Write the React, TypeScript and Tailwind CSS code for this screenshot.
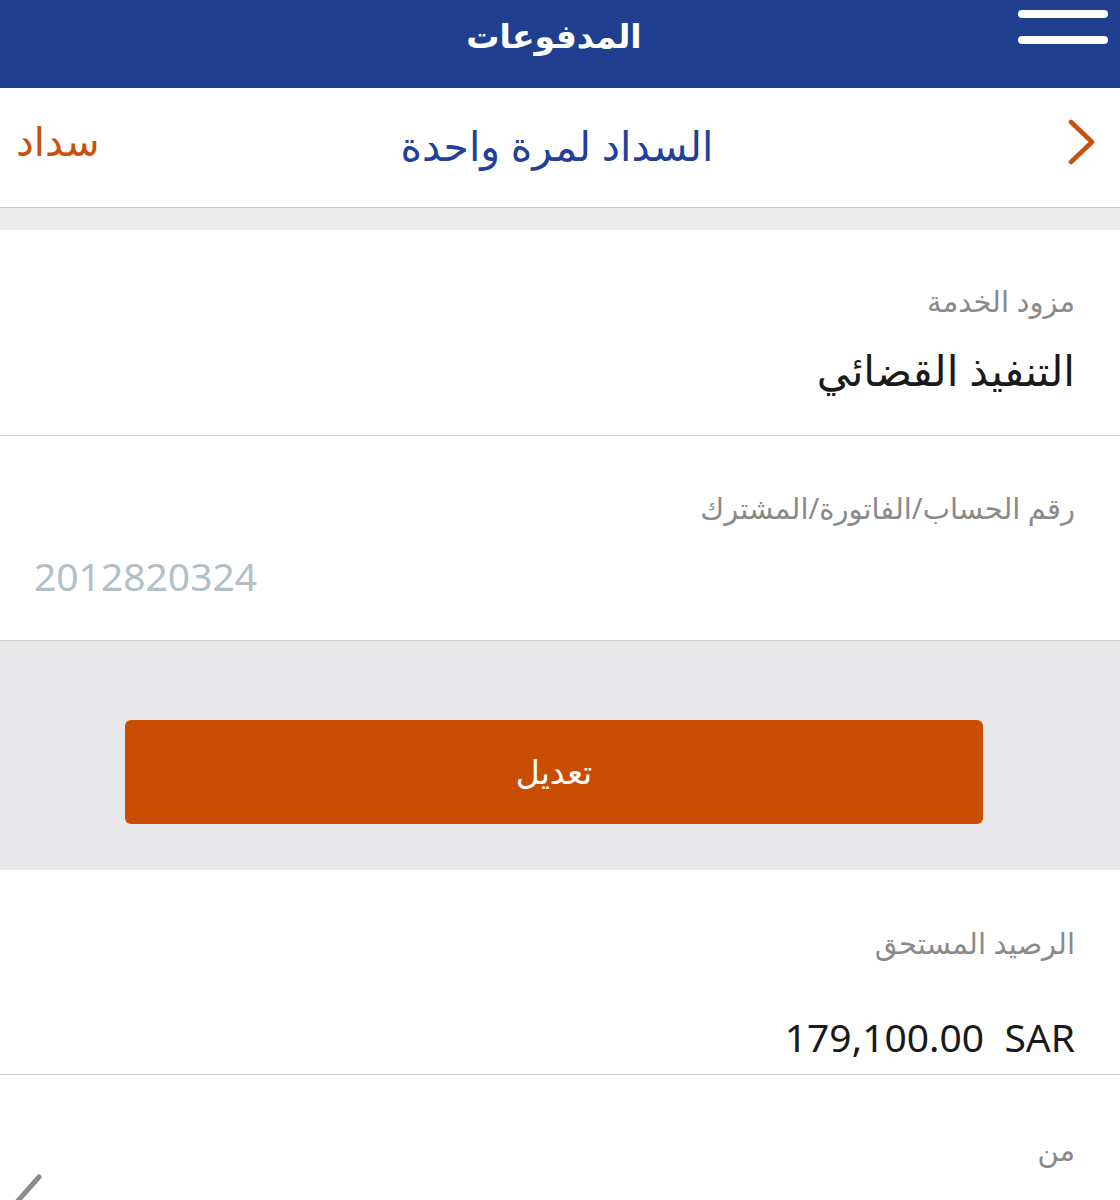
const font = { fontFamily: '"Noto Sans", "DejaVu Sans", sans-serif' }

function Field({
  label,
  children,
  className = "",
}: {
  label: string
  children?: React.ReactNode
  className?: string
}) {
  return (
    <div className={`bg-white border-b border-[#cfcfcf] px-[45px] ${className}`}>
      <div className="text-[29px] text-[#8a8a8a] leading-none">{label}</div>
      {children}
    </div>
  )
}

export default function App() {
  return (
    <div dir="rtl" className="w-[1120px] h-[1200px] overflow-hidden bg-white" style={font}>
      {/* Header */}
      <header className="relative h-[88px] bg-[#213f8f] flex items-center justify-center">
        <h1 className="text-white text-[33px] font-bold -mt-[16px] mr-[12px]">المدفوعات</h1>
        <div className="absolute right-[12px] top-[10px] flex flex-col gap-[18px]">
          <span className="block w-[90px] h-[8px] rounded-full bg-white" />
          <span className="block w-[90px] h-[8px] rounded-full bg-white" />
        </div>
      </header>

      {/* Sub header */}
      <div className="h-[120px] bg-white border-b border-[#c8c8c8] grid grid-cols-[1fr_auto_1fr] items-center pr-[22px] pl-[16px]">
        <div className="flex justify-start">
          <svg width="32" height="46" viewBox="0 0 32 46" fill="none" className="-mt-[12px]">
            <polyline
              points="5,3 26,23 5,43"
              stroke="#c8500a"
              strokeWidth="4.5"
              strokeLinecap="round"
              strokeLinejoin="round"
            />
          </svg>
        </div>
        <div className="text-[41px] text-[#22409a] -mt-[4px]">السداد لمرة واحدة</div>
        <div className="flex justify-end text-[40px] text-[#c8500a] -mt-[14px]">سداد</div>
      </div>

      <div className="h-[22px] bg-[#ebebeb]" />

      <Field label="مزود الخدمة" className="h-[206px] pt-[56px]">
        <div className="text-[42px] text-[#1a1a1a] mt-[34px] leading-none">التنفيذ القضائي</div>
      </Field>

      <Field label="رقم الحساب/الفاتورة/المشترك" className="h-[205px] pt-[57px]">
        <div dir="ltr" className="text-[39px] text-[#b3bec7] mt-[34px] leading-none -ml-[11px]">
          2012820324
        </div>
      </Field>

      {/* Button area */}
      <div className="h-[229px] bg-[#e8e8ea] flex justify-center pt-[79px]">
        <button
          type="button"
          className="w-[858px] h-[104px] bg-[#c94e04] rounded-[6px] text-white text-[33px] mr-[12px]"
        >
          تعديل
        </button>
      </div>

      <Field label="الرصيد المستحق" className="h-[205px] pt-[58px]">
        <div dir="ltr" className="text-right text-[39px] text-[#1a1a1a] mt-[60px] leading-none">
          179,100.00&nbsp;&nbsp;SAR
        </div>
      </Field>

      <div className="relative bg-white px-[45px] pt-[60px] h-[130px]">
        <div className="text-[29px] text-[#8a8a8a] leading-none">من</div>
        <svg
          width="40"
          height="60"
          viewBox="0 0 40 60"
          fill="none"
          className="absolute left-[8px] top-[98px]"
        >
          <polyline
            points="31,4 8,30 31,56"
            stroke="#8c8c8c"
            strokeWidth="5"
            strokeLinecap="round"
            strokeLinejoin="round"
          />
        </svg>
      </div>
    </div>
  )
}
